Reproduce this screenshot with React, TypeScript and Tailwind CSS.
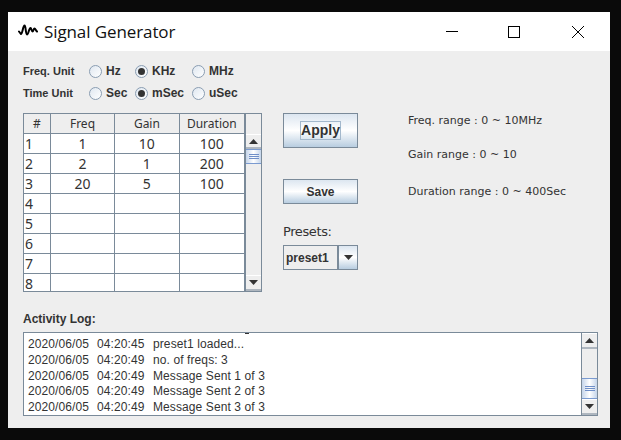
import React from 'react';

const rows = [
    ['1', '1', '10', '100'],
    ['2', '2', '1', '200'],
    ['3', '20', '5', '100'],
    ['4', '', '', ''],
    ['5', '', '', ''],
    ['6', '', '', ''],
    ['7', '', '', ''],
    ['8', '', '', ''],
];

const logLines = [
    ['2020/06/05', '04:20:45', 'preset1 loaded...'],
    ['2020/06/05', '04:20:49', 'no. of freqs: 3'],
    ['2020/06/05', '04:20:49', 'Message Sent 1 of 3'],
    ['2020/06/05', '04:20:49', 'Message Sent 2 of 3'],
    ['2020/06/05', '04:20:49', 'Message Sent 3 of 3'],
];

function Radio({ label, checked, width }: { label: string; checked?: boolean; width: string }) {
    return (
        <div className={`flex items-center ${width}`}>
            <div className="w-[13px] h-[13px] rounded-full border border-[#8a9db2] bg-gradient-to-br from-[#dfe7f0] to-white flex items-center justify-center shrink-0">
                {checked && <div className="w-[7px] h-[7px] rounded-full bg-[#333333]" />}
            </div>
            <span className="ml-[4px] text-[12px] font-bold text-[#333333]">{label}</span>
        </div>
    );
}

function Arrow({ down }: { down?: boolean }) {
    return (
        <svg width="9" height="5" viewBox="0 0 9 5">
            <path d={down ? 'M0 0H9L4.5 5Z' : 'M0 5H9L4.5 0Z'} fill="#333333" />
        </svg>
    );
}

function ScrollThumb({ className }: { className: string }) {
    return (
        <div className={`border-y border-[#7a9ad0] bg-gradient-to-r from-[#c5d5ea] via-white to-[#c5d5ea] flex flex-col items-center justify-center gap-[1px] ${className}`}>
            <div className="w-[10px] h-px bg-[#6f8fc8]" />
            <div className="w-[10px] h-px bg-[#6f8fc8]" />
            <div className="w-[10px] h-px bg-[#6f8fc8]" />
        </div>
    );
}

function ScrollButton({ down, className }: { down?: boolean; className: string }) {
    return (
        <div className={`bg-[#eeeeee] flex items-center justify-center shrink-0 border-t border-white border-b-2 border-b-[#aeb6bf] ${className}`}>
            <Arrow down={down} />
        </div>
    );
}

export default function App() {
    return (
        <div className="w-[621px] h-[440px] bg-[#0a0a0a] pt-[12px] pl-[8px] font-['Liberation_Sans',sans-serif] overflow-hidden">
            <div className="w-[602px] h-[416px] bg-[#eeeeee] flex flex-col">
                {/* Title bar */}
                <div className="h-[39px] bg-white flex items-center shrink-0">
                    <svg className="ml-[10px]" width="20" height="16" viewBox="0 0 20 16" fill="none">
                        <path
                            d="M1 7.5L3 10C4.5 10 5 1.5 6.5 1.5C8 1.5 7.5 10.5 9 10.5C10.5 10.5 11 4 12.5 4C13.5 4 13.5 7.5 14.5 7.5C15.5 7.5 15.5 4.5 16.5 4.5C17.5 4.5 18 7 19 7.5"
                            stroke="#000000"
                            strokeWidth="2"
                            strokeLinecap="round"
                        />
                    </svg>
                    <span className="ml-[6px] text-[17px] tracking-[-0.1px] text-[#111111] font-['Open_Sans',sans-serif]">Signal Generator</span>
                    <div className="ml-auto flex items-center">
                        <div className="w-[46px] flex justify-center">
                            <div className="w-[12px] h-px bg-black" />
                        </div>
                        <div className="w-[46px] ml-[16px] flex justify-center">
                            <div className="w-[12px] h-[12px] border border-black" />
                        </div>
                        <div className="w-[46px] ml-[18px] mr-[9px] flex justify-center">
                            <svg width="12" height="12" viewBox="0 0 12 12" fill="none">
                                <path d="M0 0L12 12M12 0L0 12" stroke="#000000" />
                            </svg>
                        </div>
                    </div>
                </div>

                <div className="flex-1 pl-[15px] pr-[12px] pt-[9px] flex flex-col">
                    {/* Units */}
                    <div className="flex items-center h-[22px]">
                        <span className="w-[66px] text-[11px] font-bold text-[#333333]">Freq. Unit</span>
                        <Radio label="Hz" width="w-[46px]" />
                        <Radio label="KHz" checked width="w-[57px]" />
                        <Radio label="MHz" width="w-[60px]" />
                    </div>
                    <div className="flex items-center h-[22px]">
                        <span className="w-[66px] text-[11px] font-bold text-[#333333]">Time Unit</span>
                        <Radio label="Sec" width="w-[46px]" />
                        <Radio label="mSec" checked width="w-[57px]" />
                        <Radio label="uSec" width="w-[60px]" />
                    </div>

                    <div className="flex mt-[9px]">
                        {/* Table */}
                        <div className="w-[239px] h-[179px] border border-[#7a8a99] bg-white flex shrink-0 font-['Noto_Sans',sans-serif] text-[#333333] overflow-hidden">
                            <div className="w-[222px] flex flex-col border-r-2 border-[#7a8a99]">
                                <div className="flex h-[20px] shrink-0 bg-[#eeeeee] border-b border-[#7a8a99] text-[12px]">
                                    <div className="w-[27px] border-r border-[#7a8a99] flex items-center justify-center">#</div>
                                    <div className="w-[65px] border-r border-[#7a8a99] flex items-center justify-center">Freq</div>
                                    <div className="w-[65px] border-r border-[#7a8a99] flex items-center justify-center">Gain</div>
                                    <div className="w-[65px] flex items-center justify-center">Duration</div>
                                </div>
                                {rows.map((row) => (
                                    <div key={row[0]} className="flex h-[20px] shrink-0 border-b border-[#7a8a99] text-[14px]">
                                        <div className="w-[27px] pl-[1px] border-r border-[#7a8a99] flex items-center">{row[0]}</div>
                                        <div className="w-[65px] border-r border-[#7a8a99] flex items-center justify-center">{row[1]}</div>
                                        <div className="w-[65px] border-r border-[#7a8a99] flex items-center justify-center">{row[2]}</div>
                                        <div className="w-[65px] flex items-center justify-center">{row[3]}</div>
                                    </div>
                                ))}
                            </div>
                            <div className="flex-1 flex flex-col bg-[#eeeeee]">
                                <div className="h-[20px] bg-[#eeeeee] shrink-0" />
                                <ScrollButton className="h-[15px]" />
                                <ScrollThumb className="h-[15px] shrink-0" />
                                <div className="flex-1" />
                                <ScrollButton down className="h-[16px]" />
                            </div>
                        </div>

                        {/* Buttons */}
                        <div className="w-[75px] ml-[21px] flex flex-col shrink-0">
                            <div className="h-[35px] border border-[#7a8a99] bg-gradient-to-b from-[#dce6f0] via-white to-[#b8cde0] flex items-center justify-center">
                                <span className="text-[14px] leading-[17px] font-bold text-[#333333] border border-[#a3b8cc]">Apply</span>
                            </div>
                            <div className="h-[25px] mt-[31px] border border-[#7a8a99] bg-gradient-to-b from-[#dce6f0] via-white to-[#b8cde0] flex items-center justify-center text-[12px] font-bold text-[#333333]">
                                Save
                            </div>
                            <span className="mt-[20px] text-[13px] leading-[15px] text-[#333333] font-['DejaVu_Sans',sans-serif] tracking-[-0.4px]">Presets:</span>
                            <div className="h-[25px] mt-[6px] border border-[#7a8a99] flex">
                                <div className="flex-1 pl-[2px] border-r-2 border-[#7a8a99] flex items-center text-[12px] font-bold text-[#333333]">preset1</div>
                                <div className="w-[18px] bg-gradient-to-b from-[#dce6f0] via-white to-[#b8cde0] flex items-center justify-center">
                                    <Arrow down />
                                </div>
                            </div>
                        </div>

                        {/* Ranges */}
                        <div className="ml-[50px] flex flex-col text-[11px] leading-[14px] text-[#333333] font-['DejaVu_Sans',sans-serif] pt-[1px]">
                            <span>Freq. range : 0 ~ 10MHz</span>
                            <span className="mt-[20px]">Gain range : 0 ~ 10</span>
                            <span className="mt-[23px]">Duration range : 0 ~ 400Sec</span>
                        </div>
                    </div>

                    {/* Log */}
                    <span className="mt-[20px] text-[12px] leading-[14px] font-bold text-[#333333]">Activity Log:</span>
                    <div className="mt-[6px] h-[84px] w-[575px] border border-[#7a8a99] bg-white flex relative">
                        <div className="absolute left-[221px] top-0 w-[4px] h-px bg-[#333333]" />
                        <div className="flex-1 pl-[4px] pt-[4px] text-[12px] leading-[15.75px] tracking-[0.1px] text-[#333333]">
                            {logLines.map((line, i) => (
                                <div key={i} className="flex whitespace-pre">
                                    <span className="w-[69px]">{line[0]}</span>
                                    <span className="w-[56px]">{line[1]}</span>
                                    <span>{line[2]}</span>
                                </div>
                            ))}
                        </div>
                        <div className="w-[16px] border-l border-[#7a8a99] bg-[#eeeeee] flex flex-col">
                            <ScrollButton className="h-[16px]" />
                            <div className="flex-1" />
                            <ScrollThumb className="h-[21px] shrink-0" />
                            <ScrollButton down className="h-[16px]" />
                        </div>
                    </div>
                </div>
            </div>
        </div>
    );
}
